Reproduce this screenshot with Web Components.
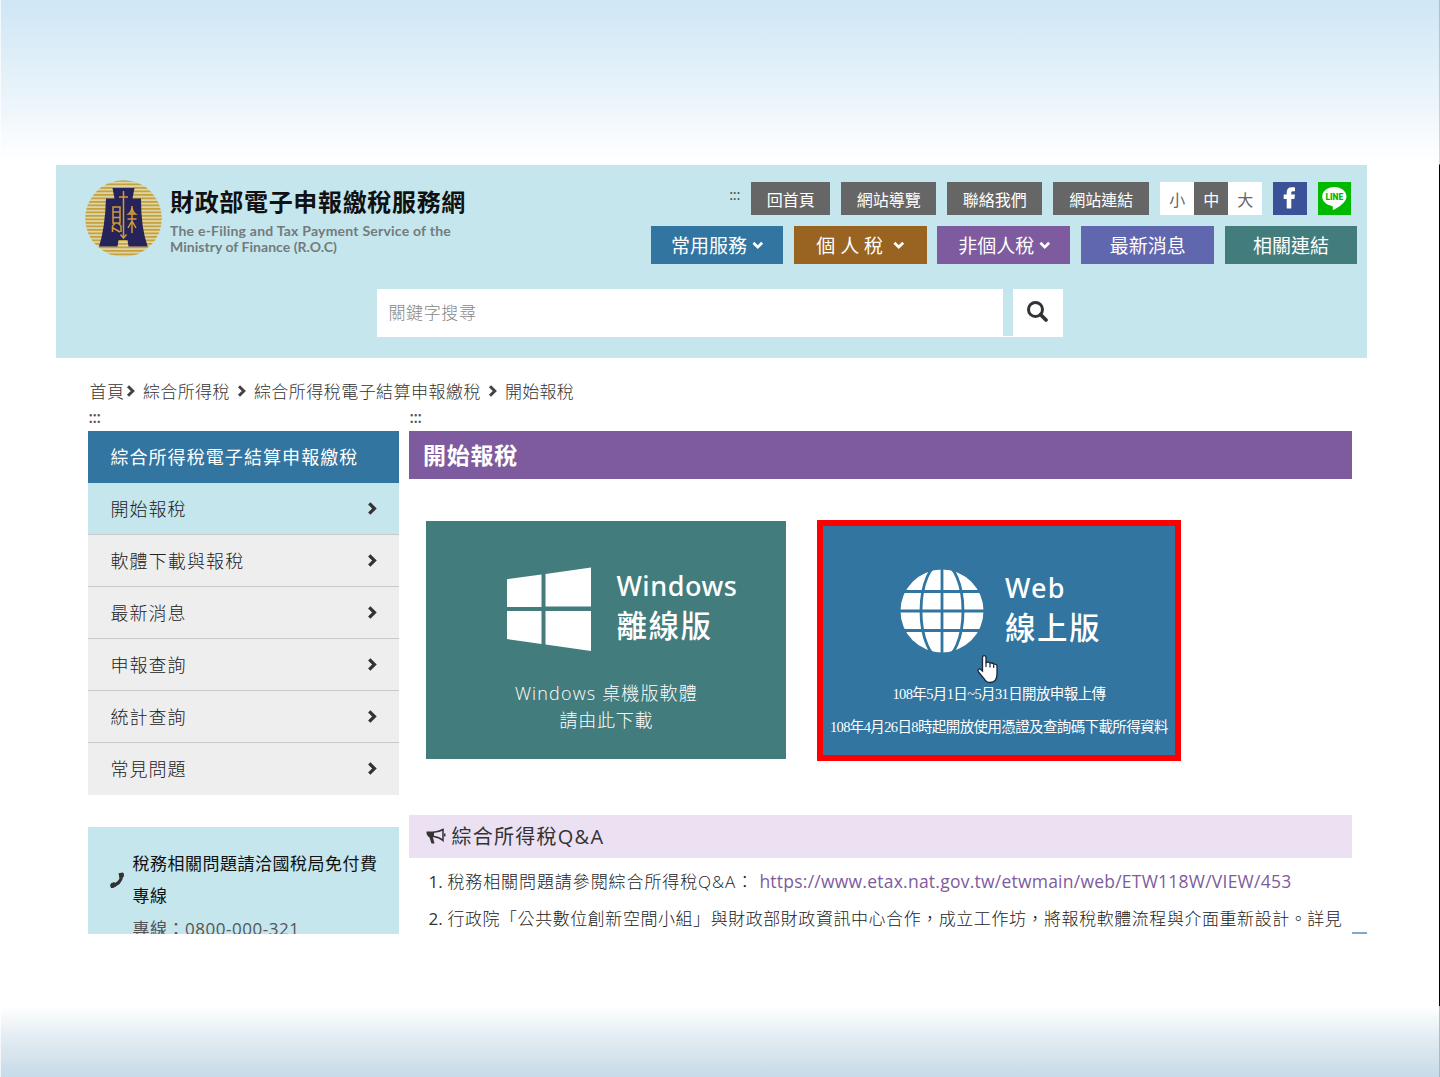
<!DOCTYPE html>
<html lang="zh-Hant">
<head>
<meta charset="utf-8">
<title>財政部電子申報繳稅服務網</title>
<style>
html,body{margin:0;height:1077px;overflow:hidden;background:#fff}
body{font-family:"Open Sans","Noto Sans CJK TC",sans-serif;color:#444}
</style>
</head>
<body>
<slide-stage>
  <tax-header></tax-header>
  <bread-crumb></bread-crumb>
  <div slot="content" style="display:flex;gap:10.5px;padding-left:32px;box-sizing:border-box">
    <side-bar></side-bar>
    <main-panel></main-panel>
  </div>
</slide-stage>
<script>
const define = (name, html) => customElements.define(name, class extends HTMLElement {
  connectedCallback() {
    if (this.shadowRoot) return;
    const root = this.attachShadow({ mode: 'open' });
    const t = document.createElement('template');
    t.innerHTML = html;
    root.append(t.content.cloneNode(true));
  }
});

/* Tracks its text so that the line takes exactly the width in the w attribute. */
customElements.define('fit-text', class extends HTMLElement {
  connectedCallback() {
    if (this.shadowRoot) return;
    const root = this.attachShadow({ mode: 'open' });
    root.innerHTML = '<style>:host{display:block;white-space:pre}span{display:inline-block;letter-spacing:0}</style><span><slot></slot></span>';
    const span = root.querySelector('span'), w = +this.getAttribute('w');
    const n = [...this.textContent].length;
    if (w) {
      this.style.width = w + 'px';
      span.style.letterSpacing = (w - span.getBoundingClientRect().width) / n + 'px';
    }
  }
});

define('chev-icon', `<style>:host{display:block;flex:none;width:10px;height:12px}:host([down]){transform:rotate(90deg)}svg{display:block;width:100%;height:100%}</style>
<svg viewBox="0 0 10 12"><path d="M2 1.200 6.800 6 2 10.800" fill="none" stroke="currentColor" stroke-width="3"/></svg>`);

define('slide-stage', `<style>
:host{display:flex;height:1077px;width:1440px;box-sizing:border-box;
 background:linear-gradient(#cfe6f5 0,#e9f4fa 95px,#fff 160px,#fff 1006px,#e1ebf2 1040px,#c7dae7 1077px)}
.edge{width:1px;background:rgba(255,255,255,.7)}
.mid{flex:1;padding:164.5px 0 0 55.400px}
.page{width:1311px;height:769px;background:#fff;overflow:hidden;position:relative}
.tick{position:absolute;right:0;bottom:0;width:15px;height:2px;background:#7fabc9}
.right{width:1px;background:linear-gradient(#aec0cb 0,#d5d9db 164px,#000 165px,#000 1006px,#b5bfc6 1006px,#a9b9c3 1077px)}
</style><div class="edge"></div><div class="mid"><div class="page"><slot></slot><slot name="content"></slot><div class="tick"></div></div></div><div class="right"></div>`);

define('ministry-seal', `<style>:host{display:block;width:77px;height:77px}svg{display:block}</style>
<svg width="77" height="77" viewBox="0 0 77 77">
<defs><clipPath id="c"><circle cx="38.5" cy="38.5" r="38.3"/></clipPath>
<pattern id="s" width="77" height="3.5" patternUnits="userSpaceOnUse"><rect width="77" height="3.5" fill="#dcd6a6"/><rect width="77" height="1.7" fill="#c69f3c"/></pattern></defs>
<g clip-path="url(#c)"><rect width="77" height="77" fill="url(#s)"/></g>
<path d="M27.500 8h22l-2 10.500h8.500q0 30 6.700 48H43.500l-1-6.500h-9l-1 6.500H14q6-18 7-48h8.500z" fill="#26235a"/>
<g fill="none" stroke="#d09a35" stroke-width="1.5">
<path d="M38.500 11v46M34 17h9M35.500 54.500l3 3.500 3-3.500M28 27h7v16h-7zM28 32h7M28 37.500h7M30.500 43l-3 3v6M33 43l3 3v6M28 48l7 4"/>
<path d="M47 26v27M43.500 34q3-2 3.500-7 .5 5 3.500 7zM42.500 39h9M43 48l4-7 4 7"/></g></svg>`);

define('site-brand', `<style>
:host{display:flex;gap:8px}
ministry-seal{margin-left:.6px}
.t{color:#111;font:700 24px/30px "Noto Sans CJK TC",sans-serif;margin-top:6px}
.e{color:#727b7d;font:700 14px/16px Lato,sans-serif}
</style><ministry-seal></ministry-seal><div><fit-text class="t" w="296">財政部電子申報繳稅服務網</fit-text><div style="height:7px"></div><fit-text class="e" w="281">The e-Filing and Tax Payment Service of the</fit-text><fit-text class="e" w="167">Ministry of Finance (R.O.C)</fit-text></div>`);

define('util-bar', `<style>
:host{display:flex;gap:11px;font:400 16px/34px "Noto Sans CJK TC",sans-serif;color:#fff;height:33px}
.b{background:#666;display:flex;justify-content:center;height:33px}
.dots{font:400 15px/24px "Open Sans",sans-serif;color:#444;width:11px}
.size{display:flex;background:#fff;color:#666;width:102px}
.size div{flex:1;text-align:center;height:33px}.size .on{background:#666;color:#fff}
svg{display:block}
</style>
<fit-text class="dots" w="11">:::</fit-text>
<div class="b" style="width:79px"><fit-text w="48">回首頁</fit-text></div>
<div class="b" style="width:95px"><fit-text w="64">網站導覽</fit-text></div>
<div class="b" style="width:95px"><fit-text w="64">聯絡我們</fit-text></div>
<div class="b" style="width:96px"><fit-text w="64">網站連結</fit-text></div>
<div class="size"><div>小</div><div class="on">中</div><div>大</div></div>
<svg width="33.5" height="33" viewBox="0 0 33.500 33"><rect width="34" height="33" fill="#3b5299"/><path d="M13.700 26.500V17h-3v-4.500h3v-2C13.700 7 15.500 5.200 18.800 5.200c1.400 0 2.700.1 3.200.2v3.800h-2c-1.600 0-1.700.7-1.700 1.900v1.400H22l-.6 4.500h-3.100v9.500z" fill="#fff"/></svg>
<svg width="33" height="33" viewBox="0 0 33 33"><rect width="33" height="33" fill="#00b900"/><path d="M16.300 5C9.400 5 4.200 9.300 4.200 14.600c0 4.600 4 8.500 9.600 9.300 1.300.3 1.200.8.900 3-.1.800.3 1.200 1.200.8 4-2 12.600-7 12.600-13.100C28.500 9.300 23.200 5 16.300 5z" fill="#fff"/><text x="16.300" y="18" text-anchor="middle" textLength="17.500" lengthAdjust="spacingAndGlyphs" font-family="Roboto,sans-serif" font-weight="900" font-size="8.200" fill="#00b900">LINE</text></svg>`);

define('nav-bar', `<style>
:host{display:flex;gap:10.8px;font:400 19px/38px "Noto Sans CJK TC",sans-serif;color:#fff;height:38px}
div{display:flex;justify-content:center;align-items:center;gap:6px;width:133px}
chev-icon{width:9.5px;height:11px}
</style>
<div style="background:#3175a0;width:132px"><fit-text w="76">常用服務</fit-text><chev-icon down></chev-icon></div>
<div style="background:#996322;gap:11px"><fit-text w="67">個 人 稅</fit-text><chev-icon down></chev-icon></div>
<div style="background:#7e5b9e"><fit-text w="76">非個人稅</fit-text><chev-icon down></chev-icon></div>
<div style="background:#6067ae"><fit-text w="76">最新消息</fit-text></div>
<div style="background:#437c7c;width:132px"><fit-text w="76">相關連結</fit-text></div>`);

define('search-box', `<style>
:host{display:flex;gap:10px;width:685.5px;height:46.5px;border-bottom:1.5px solid #fff}
.i{flex:1;background:#fff;color:#888;font:300 17px/46px "Noto Sans CJK TC",sans-serif;padding-left:11px}
.b{width:50px;background:#fff;display:flex;justify-content:center;align-items:center;color:#333}
svg{margin:-2px 1px 0 0}
</style><div class="i"><fit-text w="88">關鍵字搜尋</fit-text></div><div class="b"><svg width="23" height="23" viewBox="0 0 23 23"><circle cx="9.500" cy="9.500" r="7" fill="none" stroke="currentColor" stroke-width="3"/><path d="m14.500 14.500 5.500 5.500" stroke="currentColor" stroke-width="3.800" stroke-linecap="round"/></svg></div>`);

define('tax-header', `<style>
:host{display:block;height:193.5px;background:#c5e6ec}
.top{display:flex;justify-content:space-between;padding:15.5px 10.400px 0 28px;height:109px;box-sizing:border-box}
.r{display:flex;flex-direction:column;align-items:flex-end;padding-top:2px;gap:11px}
util-bar{margin-right:6.300px}
search-box{margin:15.500px 0 0 321.100px}
</style><div class="top"><site-brand></site-brand><div class="r"><util-bar></util-bar><nav-bar></nav-bar></div></div><search-box></search-box>`);

define('bread-crumb', `<style>
:host{display:flex;height:38px;padding:13.500px 0 0 33px;font:300 17px/38px "Noto Sans CJK TC",sans-serif;color:#333;align-items:center;box-sizing:content-box;margin-bottom:-2.5px}
chev-icon{margin:0 6.500px 0 7.500px;color:#444}
</style><fit-text w="35">首頁</fit-text><chev-icon style="margin-left:2px"></chev-icon><fit-text w="87">綜合所得稅</fit-text><chev-icon></chev-icon><fit-text w="227">綜合所得稅電子結算申報繳稅</fit-text><chev-icon></chev-icon><fit-text w="69">開始報稅</fit-text>`);

define('menu-item', `<style>
:host{display:flex;align-items:center;justify-content:space-between;height:51px;border-bottom:1px solid #c9c9c9;background:#eee;padding:0 20.500px 0 22px;color:#222}
:host([active]){background:#c5e6ec}
:host([last]){border-bottom-color:#eee}
chev-icon{color:#333;width:11px;height:13px}
</style><slot></slot><chev-icon></chev-icon>`);

define('contact-box', `<style>
:host{display:flex;background:#c5e6ec;margin-top:32px;height:160px;padding:21px 0 0 21px;gap:7px;font:400 17px/32.500px "Open Sans","Noto Sans CJK TC",sans-serif;color:#111}
svg{margin-top:23px;flex:none}
.n{font-weight:400;color:#555}
</style><svg width="16" height="18" viewBox="0 0 16 18"><path d="M3 14.500Q11.500 13.500 12.800 4.500" fill="none" stroke="#333" stroke-width="3.200"/><path d="m9.600 2.300 4.200-.9 1.100 1.100v3.200l-4.600 1zM2 12.200l3.400-1.200 2.300 4-3.500 1.900H2L1 14.500z" fill="#333"/></svg>
<div><fit-text w="245">稅務相關問題請洽國稅局免付費</fit-text><fit-text w="35">專線</fit-text><fit-text class="n" w="167">專線：0800-000-321</fit-text></div>`);

define('side-bar', `<style>
:host{display:block;width:310.5px;font:300 18px/50px "Noto Sans CJK TC",sans-serif}
.d{font:600 16px/21px "Open Sans",sans-serif;color:#555;height:24px}
.h{background:#3175a0;color:#fff;height:51.500px;line-height:50px;padding-left:22px;font-weight:400}
</style><fit-text class="d" w="12">:::</fit-text><div class="h"><fit-text w="248">綜合所得稅電子結算申報繳稅</fit-text></div>
<menu-item active><fit-text w="76">開始報稅</fit-text></menu-item>
<menu-item><fit-text w="134">軟體下載與報稅</fit-text></menu-item>
<menu-item><fit-text w="76">最新消息</fit-text></menu-item>
<menu-item><fit-text w="76">申報查詢</fit-text></menu-item>
<menu-item><fit-text w="76">統計查詢</fit-text></menu-item>
<menu-item last><fit-text w="76">常見問題</fit-text></menu-item>
<contact-box></contact-box>`);

define('version-card', `<style>
:host{display:block;box-sizing:border-box;color:#fff;position:relative}
.row{display:flex;gap:var(--gap,25px)}
.icon{width:84px;height:84px}
.ttl{height:84px;font:500 27px/37px "Noto Sans","Noto Sans CJK TC",sans-serif}
::slotted([slot=note]){display:flex;flex-direction:column;align-items:center}
</style><div class="row"><div class="icon"><slot name="icon"></slot></div><div class="ttl"><slot name="title"></slot></div></div><slot name="note"></slot><slot></slot>`);

define('hand-cursor', `<style>:host{position:absolute;left:153px;top:128px}svg{display:block}</style>
<svg width="24" height="30" viewBox="0 0 24 30"><path d="M6.500 3.500C6.500 1 10 1 10 3.500V8.500q3-.8 4 .7 2.800-.7 3.700.9 3.300-.4 3.300 2.200V20q0 8.500-7 8.500-4 0-6-4L2.500 18c-1.500-2.500 1-4 2.500-2.300L6.500 17z" fill="#fff" stroke="#1c2738" stroke-width="1.300"/><path d="M10 8.500V13M14 9.500V13.500M17.700 10.500V14" stroke="#1c2738" stroke-width="1.200"/></svg>`);

define('main-panel', `<style>
:host{display:block;width:942.5px;font:400 17px/37px "Open Sans","Noto Sans CJK TC",sans-serif;color:#333}
.d{font:600 16px/21px "Open Sans",sans-serif;color:#555;height:24px}
.bar{background:#7e5b9e;color:#fff;font:700 23px/46px "Noto Sans CJK TC",sans-serif;height:47.5px;padding-left:13.500px}
.cards{display:flex;gap:30.5px;padding:41px 0 0 17px;height:336px;box-sizing:border-box}
.win{width:360px;height:238px;background:#437c7c;padding:46px 0 0 81px;margin-top:1.5px}
.web{width:364px;height:241px;background:#3175a0;border:6px solid #f00;padding:43px 0 0 77px;--gap:21px}
.web [slot=note]{margin-left:-77px;font:400 14.500px/33px "Liberation Serif","Noto Sans CJK TC",serif;margin-top:25px}
.win [slot=note]{margin-left:-81px;font:300 18px/27px "Open Sans","Noto Sans CJK TC",sans-serif;margin-top:29px}
.big{font-family:"Noto Sans CJK TC",sans-serif;font-size:30.500px;line-height:40px;font-weight:500}
.qa{background:#ebe1f3;height:43px;display:flex;align-items:center;gap:5px;padding-left:17px;color:#333;font-size:20px;line-height:43px;margin-bottom:5.500px}
.l{display:flex;padding-left:19px;font-weight:400}
.cj{font-weight:300;color:#222}
</style>
<fit-text class="d" w="12">:::</fit-text>
<div class="bar"><fit-text w="95">開始報稅</fit-text></div>
<div class="cards">
<version-card class="win">
<svg slot="icon" width="84" height="84" viewBox="0 0 84 84" fill="#fff"><path d="M0 12.200 34.500 7.500v32.500H0zM38.500 7 84 .5v39H38.500zM0 44h34.500V77L0 72zM38.500 44H84V84l-45.500-6.500z"/></svg>
<fit-text slot="title" w="121">Windows</fit-text><fit-text slot="title" class="big" w="96">離線版</fit-text>
<div slot="note"><fit-text w="183">Windows 桌機版軟體</fit-text><fit-text w="94">請由此下載</fit-text></div>
</version-card>
<version-card class="web">
<svg slot="icon" width="84" height="84" viewBox="0 0 84 84"><circle cx="42" cy="42" r="41.500" fill="#fff"/><g fill="none" stroke="#3175a0" stroke-width="2.800"><path d="M42 0v84M0 42h84M0 22.500h84M0 61.500h84"/><ellipse cx="42" cy="42" rx="21" ry="48"/></g></svg>
<fit-text slot="title" w="61">Web</fit-text><fit-text slot="title" class="big" w="96">線上版</fit-text>
<div slot="note"><fit-text w="213">108年5月1日~5月31日開放申報上傳</fit-text><fit-text w="338">108年4月26日8時起開放使用憑證及查詢碼下載所得資料</fit-text></div>
<hand-cursor></hand-cursor>
</version-card>
</div>
<div class="qa"><svg width="20" height="18" viewBox="0 0 20 18"><path d="M.5 4.500H8V10H6.800l1.700 6.500H5.500L3.500 10.500Q0 8 .5 4.500z" fill="#333"/><path d="M7.500 5.200Q13 5 17 2.500v11Q13 10 7.500 9.500" fill="none" stroke="#333" stroke-width="1.500"/><path d="M18.700 6.500v3" stroke="#333" stroke-width="1.500"/></svg><fit-text w="153">綜合所得稅Q&amp;A</fit-text></div>
<div class="l"><fit-text w="19">1. </fit-text><fit-text class="cj" w="312">稅務相關問題請參閱綜合所得稅Q&amp;A： </fit-text><fit-text w="532" style="color:#7e5b9e;font-size:17.500px">https://www.etax.nat.gov.tw/etwmain/web/ETW118W/VIEW/453</fit-text></div>
<div class="l"><fit-text w="19">2. </fit-text><fit-text class="cj" w="895">行政院「公共數位創新空間小組」與財政部財政資訊中心合作，成立工作坊，將報稅軟體流程與介面重新設計。詳見</fit-text></div>`);
</script>
</body>
</html>
